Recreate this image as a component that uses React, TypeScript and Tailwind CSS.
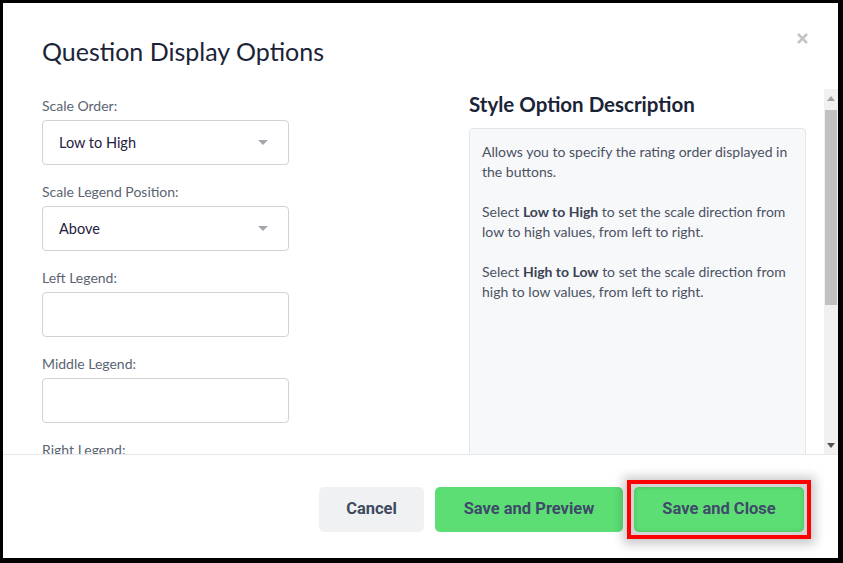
import React from 'react'

const Caret: React.FC = () => (
    <svg width="10" height="6" viewBox="0 0 10 6" className="shrink-0">
        <path d="M0 0 L10 0 L5 5 Z" fill="#a3a7ad" />
    </svg>
)

const SelectField: React.FC<{ label: string; value: string }> = ({ label, value }) => (
    <div className="mb-[17px]">
        <div className="text-[14px] leading-5 text-[#5b6472] mb-[4px]">{label}</div>
        <div className="h-[45px] w-[247px] border border-[#cfd3d8] rounded-[4px] flex items-center justify-between pl-4 pr-5">
            <span className="text-[14.5px] text-[#1f2140]">{value}</span>
            <Caret />
        </div>
    </div>
)

const TextField: React.FC<{ label: string }> = ({ label }) => (
    <div className="mb-[17px]">
        <div className="text-[14px] leading-5 text-[#5b6472] mb-[4px]">{label}</div>
        <input
            type="text"
            className="block h-[45px] w-[247px] border border-[#cfd3d8] rounded-[4px] px-4 outline-none"
        />
    </div>
)

// drawn scrollbar, the browser here hides real ones
const ScrollBar: React.FC = () => (
    <div className="w-[14px] shrink-0 bg-[#f1f1f1] flex flex-col items-center">
        <div className="h-[18px] flex items-center justify-center">
            <svg width="8" height="5" viewBox="0 0 8 5">
                <path d="M0 5 L8 5 L4 0 Z" fill="#a3a3a3" />
            </svg>
        </div>
        <div className="w-[12px] h-[195px] mt-[3px] bg-[#c1c1c1]" />
        <div className="flex-1" />
        <div className="h-[18px] flex items-center justify-center">
            <svg width="8" height="5" viewBox="0 0 8 5">
                <path d="M0 0 L8 0 L4 5 Z" fill="#505050" />
            </svg>
        </div>
    </div>
)

const App: React.FC = () => {
    return (
        <div className="w-[843px] h-[563px] bg-white border-black border-l-[3px] border-t-[3px] border-r-[5px] border-b-[5px] flex flex-col font-['Lato',sans-serif]">
            <div className="h-[86px] shrink-0 flex items-start justify-between pl-[39px] pr-[30px] pt-[32px]">
                <h1 className="text-[25px] leading-8 text-[#1b2437]">Question Display Options</h1>
                <button className="mt-[-2px] p-0">
                    <svg width="11" height="11" viewBox="0 0 11 11">
                        <path d="M1 1 L10 10 M10 1 L1 10" stroke="#c4c4c4" strokeWidth="2.6" />
                    </svg>
                </button>
            </div>

            <div className="flex-1 min-h-0 flex">
                <div className="flex-1 overflow-hidden flex pl-[39px]">
                    <div className="w-[247px] shrink-0 pt-[7px]">
                        <SelectField label="Scale Order:" value="Low to High" />
                        <SelectField label="Scale Legend Position:" value="Above" />
                        <TextField label="Left Legend:" />
                        <TextField label="Middle Legend:" />
                        <TextField label="Right Legend:" />
                    </div>

                    <div className="ml-[180px] w-[337px] shrink-0 pt-[3px]">
                        <h2 className="text-[20.5px] leading-6 font-bold text-[#1b2437] mb-3">Style Option Description</h2>
                        <div className="h-[588px] bg-[#f7f8fa] border border-[#e4e6e9] rounded-[4px] px-3 pt-[13px] text-[14px] leading-5 text-[#4b5262]">
                            <p>Allows you to specify the rating order displayed in the buttons.</p>
                            <p className="mt-5">
                                Select <b className="text-[#3b4354]">Low to High</b> to set the scale direction from low to high values, from left to right.
                            </p>
                            <p className="mt-5">
                                Select <b className="text-[#3b4354]">High to Low</b> to set the scale direction from high to low values, from left to right.
                            </p>
                        </div>
                    </div>
                </div>
                <ScrollBar />
            </div>

            <div className="h-[104px] shrink-0 border-t border-[#e5e7eb] flex justify-end items-start gap-[11px] pt-[32px] pr-[34px] font-['Roboto',sans-serif]">
                <button className="h-[45px] w-[105px] rounded-[5px] bg-[#f0f1f3] text-[16.5px] font-bold text-[#3e4a5d]">
                    Cancel
                </button>
                <button className="h-[45px] w-[188px] rounded-[5px] bg-[#5cde74] text-[16.5px] font-bold text-[#3f4a6a]">
                    Save and Preview
                </button>
                <div className="m-[-7px] border-4 border-[#ff0000] bg-[#d4d4d4] p-[3px] shadow-[0_1px_10px_4px_rgba(0,0,0,0.22)]">
                    <button className="block h-[45px] w-[170px] rounded-[5px] bg-[#5cde74] text-[16.5px] font-bold text-[#3f4a6a] shadow-[inset_0_0_4px_rgba(0,0,0,0.18)]">
                        Save and Close
                    </button>
                </div>
            </div>
        </div>
    )
}

export default App
